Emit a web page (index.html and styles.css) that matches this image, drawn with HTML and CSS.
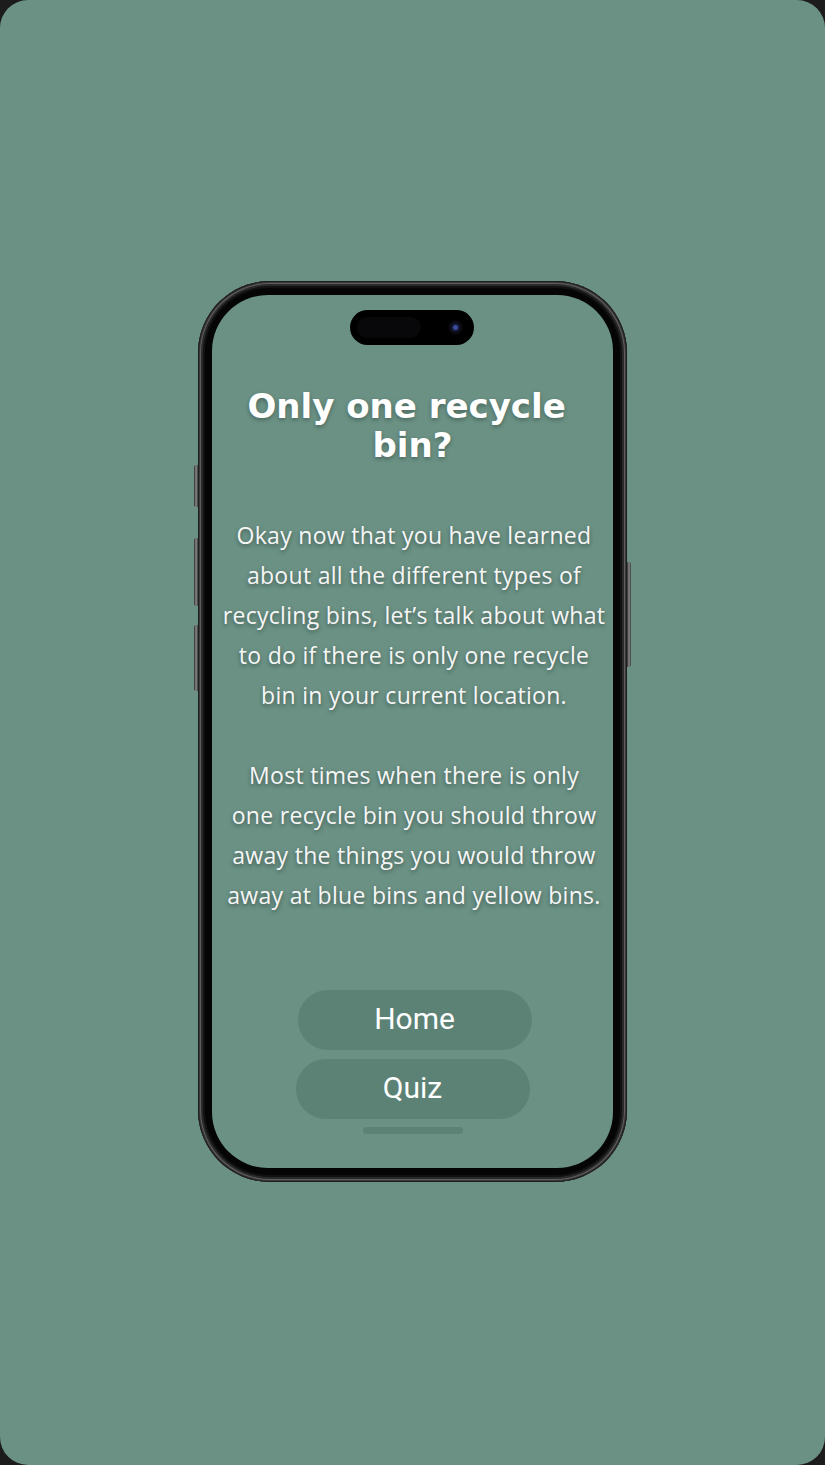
FILE: index.html
```html
<!DOCTYPE html>
<html lang="en">
<head>
<meta charset="utf-8">
<title>Only one recycle bin?</title>
<link rel="stylesheet" href="styles.css">
</head>
<body>
<div class="page">
  <div class="phone">
    <span class="side-btn action"></span>
    <span class="side-btn vol-up"></span>
    <span class="side-btn vol-down"></span>
    <span class="side-btn power"></span>
    <div class="screen">
      <div class="island"><span class="island-sensor"></span><span class="island-cam"></span></div>
      <h1 class="title">Only one recycle&nbsp;<br>bin?</h1>
      <p class="body-text">Okay now that you have learned<br>about all the different types of<br>recycling bins, let’s talk about what<br>to do if there is only one recycle<br>bin in your current location.</p>
      <p class="body-text second">Most times when there is only<br>one recycle bin you should throw<br>away the things you would throw<br>away at blue bins and yellow bins.</p>
      <div class="actions">
        <button class="pill home">Home</button>
        <button class="pill quiz">Quiz</button>
      </div>
      <div class="home-indicator"></div>
    </div>
  </div>
</div>
</body>
</html>
```

FILE: styles.css
```css
* { box-sizing: border-box; }
html, body { margin: 0; padding: 0; }
body { background: #1c1c1c; width: 825px; height: 1465px; overflow: hidden; }

.page {
  width: 825px;
  height: 1465px;
  border-radius: 28px;
  background: #6a9184;
  display: flex;
  align-items: center;
  justify-content: center;
  padding-bottom: 2px;
}

.phone {
  position: relative;
  width: 429px;
  height: 901px;
  border-radius: 72px;
  background: #050505;
  padding: 14px;
  box-shadow:
    inset 0 0 0 1px #1e1e1e,
    inset 0 0 0 2px #3a3a3a,
    inset 0 0 0 3px #5e5e5e,
    inset 0 0 0 5px #2a2a2a,
    inset 0 0 0 7px #111;
}

.side-btn {
  position: absolute;
  width: 4px;
  background: linear-gradient(90deg, #2a2a2a, #8a8a8a 50%, #3a3a3a);
  border-radius: 2px 0 0 2px;
}
.side-btn.action { left: -4px; top: 184px; height: 42px; }
.side-btn.vol-up { left: -4px; top: 257px; height: 68px; }
.side-btn.vol-down { left: -4px; top: 344px; height: 66px; }
.side-btn.power { right: -4px; top: 281px; height: 105px; border-radius: 0 2px 2px 0; }

.screen {
  position: relative;
  width: 401px;
  height: 873px;
  border-radius: 56px;
  background: #6a9184;
  overflow: hidden;
  display: flex;
  flex-direction: column;
  align-items: center;
  padding-top: 92px;
}

.island {
  position: absolute;
  top: 15px;
  left: 138px;
  width: 124px;
  height: 35px;
  border-radius: 18px;
  background: #000;
}
.island-sensor {
  position: absolute;
  left: 7px;
  top: 7px;
  width: 64px;
  height: 21px;
  border-radius: 11px;
  background: #08080a;
}
.island-cam {
  position: absolute;
  left: 98px;
  top: 10px;
  width: 15px;
  height: 15px;
  border-radius: 50%;
  background: radial-gradient(circle, #3a4a9a 0 2px, #141a3a 3px, #0d0d1a 5px, #050508 7px);
}

.title {
  margin: 0;
  font-family: "DejaVu Sans", "Inter", sans-serif;
  font-weight: 700;
  font-size: 34px;
  line-height: 39px;
  color: #ffffff;
  text-align: center;
  text-shadow: 0 2px 4px rgba(0, 0, 0, 0.3);
}

.body-text {
  margin: 50px 0 0 3px;
  font-family: "Open Sans", "Lato", sans-serif;
  font-size: 23px;
  letter-spacing: 0.3px;
  line-height: 40px;
  color: #f6f6f6;
  text-align: center;
  text-shadow: 0 2px 4px rgba(0, 0, 0, 0.4);
}
.body-text.second { margin-top: 40px; }

.actions {
  margin-top: 75px;
  display: flex;
  flex-direction: column;
  align-items: center;
  gap: 9px;
}

.pill {
  width: 234px;
  height: 60px;
  border: none;
  border-radius: 30px;
  background: #5c8276;
  color: #ffffff;
  font-family: "Roboto", sans-serif;
  font-size: 30px;
  padding: 0 0 4px;
}
.pill.home { margin-left: 4px; }

.home-indicator {
  margin-top: 8px;
  width: 100px;
  height: 7px;
  border-radius: 4px;
  background: #5c8276;
}
```
